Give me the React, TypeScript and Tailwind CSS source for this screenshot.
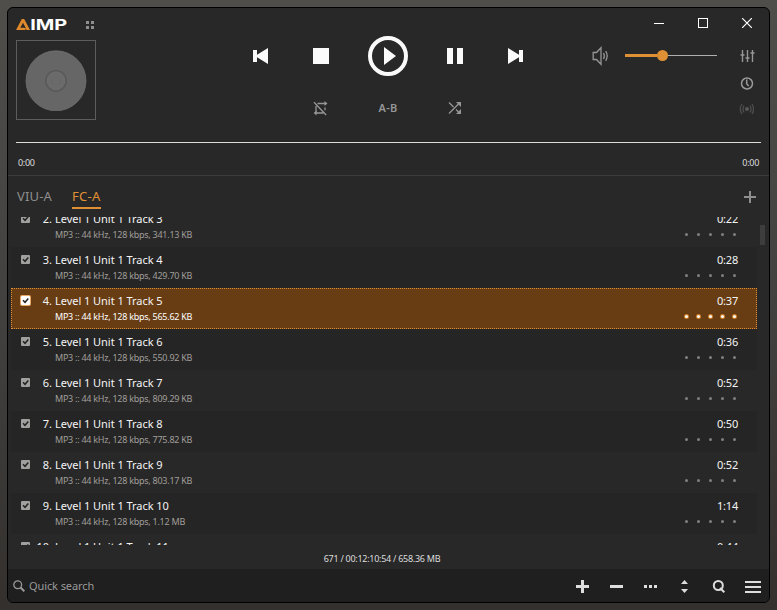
import React from "react";

type Track = { n: number; title: string; info: string; time: string; selected?: boolean };

const tracks: Track[] = [
  { n: 2, title: "Level 1 Unit 1 Track 3", info: "341.13 KB", time: "0:22" },
  { n: 3, title: "Level 1 Unit 1 Track 4", info: "429.70 KB", time: "0:28" },
  { n: 4, title: "Level 1 Unit 1 Track 5", info: "565.62 KB", time: "0:37", selected: true },
  { n: 5, title: "Level 1 Unit 1 Track 6", info: "550.92 KB", time: "0:36" },
  { n: 6, title: "Level 1 Unit 1 Track 7", info: "809.29 KB", time: "0:52" },
  { n: 7, title: "Level 1 Unit 1 Track 8", info: "775.82 KB", time: "0:50" },
  { n: 8, title: "Level 1 Unit 1 Track 9", info: "803.17 KB", time: "0:52" },
  { n: 9, title: "Level 1 Unit 1 Track 10", info: "1.12 MB", time: "1:14" },
  { n: 10, title: "Level 1 Unit 1 Track 11", info: "1.08 MB", time: "0:44" },
];

function Logo() {
  return (
    <svg width="52" height="12" viewBox="0 0 52 12" className="block overflow-visible">
      <path fillRule="evenodd" d="M0 11L5.800 0H8.200L14 11H11L9.600 10.200L9 11ZM7 3.800L4.300 8.800H8.200L10 9.600Z" fill="#e0882c" />
      <text x="14.2" y="11" textLength="37" lengthAdjust="spacingAndGlyphs" fontFamily="Inter, 'Liberation Sans', sans-serif" fontWeight="700" fontSize="15" fill="#fff">IMP</text>
    </svg>
  );
}

function Cover() {
  return (
    <div className="flex h-20 w-20 items-center justify-center border border-[#5d5d5d]">
      <svg width="62" height="62" viewBox="0 0 62 62">
        <circle cx="31" cy="31.800" r="30" fill="#666" stroke="#707070" strokeWidth="0.8" />
        <circle cx="31" cy="31.800" r="10.2" fill="#6b6b6b" stroke="#575958" strokeWidth="1.4" />
        <circle cx="31" cy="31.800" r="4" fill="#6b6b6b" stroke="#666" strokeWidth="0.8" />
      </svg>
    </div>
  );
}

function Transport() {
  return (
    <div className="flex w-[308px] flex-col pt-[26px]">
      <div className="grid h-11 grid-cols-[54px_68px_66px_68px_52px] place-items-center text-[#fafafa]">
        <svg width="16" height="16" fill="currentColor"><path d="M1 2h4v4.7L16 0v16L5 9.3V14H1z" /></svg>
        <div className="h-4 w-4 bg-[#fafafa]" />
        <svg width="40" height="40">
          <circle cx="20" cy="20" r="18" fill="none" stroke="#fafafa" strokeWidth="4" />
          <path d="M16 11v18l12-9z" fill="#fafafa" />
        </svg>
        <svg width="16" height="16" fill="currentColor"><path d="M0 0h6v16H0zM10 0h6v16h-6z" /></svg>
        <svg width="16" height="16" fill="currentColor"><path d="M16 2h-4v4.700L1 0v16l11-6.700V14h4z" /></svg>
      </div>
      <div className="mt-[22px] grid h-4 grid-cols-[54px_67px_68px_66px_53px] place-items-center text-[#969696]">
        <span />
        <svg width="15" height="15" fill="none" stroke="currentColor" strokeWidth="1.3">
          <path d="M1 1.200L13.200 14M4.500 2.500H13M3 5v6.500M12 6.500v2.700M2 12h8.500" />
          <path d="M11.500 0l3 2.500-3 2.500zM3.500 9.500L.7 12l2.800 2.500z" fill="currentColor" stroke="none" />
        </svg>
        <span className="text-[11px] font-semibold leading-4 tracking-[0.2px]">A-B</span>
        <svg width="14" height="14" fill="none" stroke="currentColor" strokeWidth="1.3">
          <path d="M1 12.500L11.500 2M1 1.500l4.500 4.500M8 8.500l3.500 3.500" />
          <path d="M8 1h5v5zM13 8v5H8z" fill="currentColor" stroke="none" />
        </svg>
      </div>
    </div>
  );
}

function Volume() {
  return (
    <div className="flex h-9 items-center">
      <svg width="20" height="20" className="ml-[50px]" fill="none" stroke="#969696" strokeWidth="1.3">
        <path d="M2.200 6.500h3.300l4.500-4.800v16.600l-4.500-4.800h-3.300z" />
        <path d="M12.500 7q1.700 3 0 6M14.700 5.200q3 4.800 0 9.600" />
      </svg>
      <div className="-mt-px ml-[14px] flex w-[92px] items-center">
        <div className="h-[3px] w-8 bg-[#e09034]" />
        <div className="h-[11px] w-[11px] rounded-full bg-[#e09034]" />
        <div className="h-px flex-1 bg-[#b0b0b0]" />
      </div>
      <svg width="15" height="14" className="ml-[23px]" fill="none" stroke="#969696" strokeWidth="1.400">
        <path d="M2.500 1v12M7.500 1v12M12.500 1v12M.5 6h4M5.500 9h4M10.500 4h4" />
      </svg>
    </div>
  );
}

function Player() {
  return (
    <header className="border-b border-[#3b3b3b]">
      <div className="flex h-[134px]">
        <div className="flex w-[225px] flex-col pl-2 pt-[11px]">
          <div className="flex h-3 items-center">
            <Logo />
            <div className="ml-[18px] grid grid-cols-2 gap-[2px]">
              {[0, 1, 2, 3].map((i) => <span key={i} className="h-[3px] w-[3px] bg-[#8e8e8e]" />)}
            </div>
          </div>
          <div className="mt-[9px]"><Cover /></div>
        </div>
        <Transport />
        <div className="flex w-[228px] flex-col">
          <div className="flex h-[30px] justify-end text-white">
            <div className="flex w-11 items-center justify-center"><span className="h-px w-[10px] bg-white" /></div>
            <div className="flex w-11 items-center justify-center"><span className="h-[10px] w-[10px] border border-white" /></div>
            <div className="flex w-11 items-center justify-center">
              <svg width="10" height="10" stroke="currentColor" strokeWidth="1.200"><path d="M0 0l10 10M10 0L0 10" /></svg>
            </div>
          </div>
          <Volume />
          <div className="flex flex-col items-end gap-[13px] pr-[15px] pt-[3px]">
            <svg width="15" height="13" fill="none" stroke="#9a9a9a" strokeWidth="1.500">
              <circle cx="8" cy="6.500" r="5.500" /><path d="M7.700 2.500v4.300l2 2.200" />
            </svg>
            <svg width="15" height="12" fill="none" stroke="#505050" strokeWidth="1.200">
              <circle cx="8" cy="6" r="2" fill="#585858" stroke="none" />
              <path d="M5 2.500q-2 3.500 0 7M11 2.500q2 3.500 0 7M3 1q-3.500 5 0 10M13 1q3 5 0 10" />
            </svg>
          </div>
        </div>
      </div>
      <div className="mx-2 h-px bg-[#dfdcd6]" />
      <div className="flex h-8 items-center justify-between px-[10px] pt-2 text-[9px] tracking-[-0.3px] text-[#ddd]">
        <span>0:00</span>
        <span>0:00</span>
      </div>
    </header>
  );
}

function TrackRow({ track, odd }: { track: Track; odd: boolean }) {
  const sel = track.selected;
  return (
    <div className={`flex h-[41px] shrink-0 border ${sel ? "border-dotted border-[#e09034] bg-[#683d14]" : odd ? "border-transparent bg-[#252525]" : "border-transparent"}`}>
      <div className={`ml-[9px] mt-[7px] flex h-[9px] w-[9px] items-center justify-center rounded-[1px] ${sel ? "bg-white ring-1 ring-[#e8a762]" : "bg-[#a0a09e]"}`}>
        <svg width="7" height="7" fill="none" stroke="#222" strokeWidth="1.500"><path d="M1 3.300l2 2L6.300 1.500" /></svg>
      </div>
      <div className="flex flex-1 flex-col pt-1">
        <div className="flex h-4 text-[11px] leading-4 tracking-[-0.04px] text-[#f4f4f4]">
          <span className="w-[22px] text-right">{track.n}.</span>
          <span className="ml-[3px] whitespace-nowrap">{track.title}</span>
        </div>
        <div className={`ml-[25px] h-4 whitespace-nowrap text-[9px] leading-[15px] tracking-[-0.26px] ${sel ? "text-white" : "text-[#a09e9a]"}`}>
          MP3 :: 44 kHz, 128 kbps, {track.info}
        </div>
      </div>
      <div className="mr-[18px] flex flex-col items-end pt-1">
        <span className="text-[11px] leading-4 tracking-[-0.2px] text-[#f4f4f4]">{track.time}</span>
        <div className="mt-[6px] flex gap-[9px] pr-[2px]">
          {[0, 1, 2, 3, 4].map((i) => (
            <span key={i} className={`h-[3px] w-[3px] rounded-full ${sel ? "bg-white ring-1 ring-[#d08028]" : "bg-[#808080]"}`} />
          ))}
        </div>
      </div>
    </div>
  );
}

function Playlist() {
  return (
    <main className="flex flex-col">
      <div className="flex h-[41px] items-start justify-between pl-[9px] pr-[13px] pt-[11px]">
        <div className="flex gap-5 text-[13px] leading-[18px]">
          <span className="h-[22px] tracking-[0.15px] text-[#8e8e8e]">VIU-A</span>
          <span className="h-[22px] w-[29px] whitespace-nowrap border-b-2 border-[#e09034] tracking-[0.3px] text-[#e09034]">FC-A</span>
        </div>
        <svg width="12" height="12" className="mt-1" fill="#8e8e8e"><path d="M5 0h2v5h5v2H7v5H5V7H0V5h5z" /></svg>
      </div>
      <div className="flex h-[328px] overflow-hidden">
        <div className="-mt-[11px] ml-[3px] flex w-[746px] flex-col">
          {tracks.map((t, i) => <TrackRow key={t.n} track={t} odd={i % 2 === 1} />)}
        </div>
        <div className="ml-[3px] mt-2 h-5 w-[5px] bg-[#3d3d3d]" />
      </div>
      <div className="h-6 text-center text-[9px] leading-7 tracking-[-0.27px] text-[#ddd]"><span className="-ml-[13px]">671 / 00:12:10:54 / 658.36 MB</span></div>
    </main>
  );
}

function Footer() {
  return (
    <footer className="flex h-[33px] items-center justify-between bg-[#1f1f1f] pl-[5px] pr-2">
      <div className="flex items-center gap-1 pt-px text-[11px] tracking-[-0.1px] text-[#999]">
        <svg width="12" height="12" className="-mt-px" fill="none" stroke="#999"><circle cx="4.700" cy="4.700" r="3.900" strokeWidth="1.300" /><path d="M7.500 7.500l3.800 3.800" strokeWidth="2" /></svg>
        <span className="pt-px">Quick search</span>
      </div>
      <div className="flex items-center pt-[2px] text-[#ddd]">
        <div className="mr-5 flex items-center gap-[21px]">
          <svg width="13" height="13" fill="currentColor"><path d="M5 0h3v5h5v3H8v5H5V8H0V5h5z" /></svg>
          <div className="h-[3px] w-[13px] bg-[#ddd]" />
          <div className="flex w-[13px] justify-between">{[0, 1, 2].map((i) => <span key={i} className="h-[3px] w-[3px] bg-[#ddd]" />)}</div>
          <svg width="13" height="13" fill="currentColor"><path d="M3 4l3.500-4L10 4zM3 9h7l-3.500 4z" /></svg>
          <svg width="13" height="13" fill="none" stroke="currentColor"><circle cx="6.300" cy="5.500" r="4.500" strokeWidth="2" /><path d="M8 8l4.300 4.300" strokeWidth="2" /></svg>
        </div>
        <div className="mt-px flex h-3 w-4 flex-col justify-between">{[0, 1, 2].map((i) => <span key={i} className="h-[2px] bg-[#ddd]" />)}</div>
      </div>
    </footer>
  );
}

export default function App() {
  return (
    <div className="h-[610px] w-[777px] bg-linear-to-b from-[#504e4b] from-0% via-[#43413f] via-50% to-[#33302e] to-100% p-[7px] font-['Noto_Sans','Open_Sans',sans-serif]">
      <div className="flex h-[596px] w-[763px] flex-col overflow-hidden rounded-[6px] border border-black bg-[#282828]">
        <Player />
        <Playlist />
        <Footer />
      </div>
    </div>
  );
}
